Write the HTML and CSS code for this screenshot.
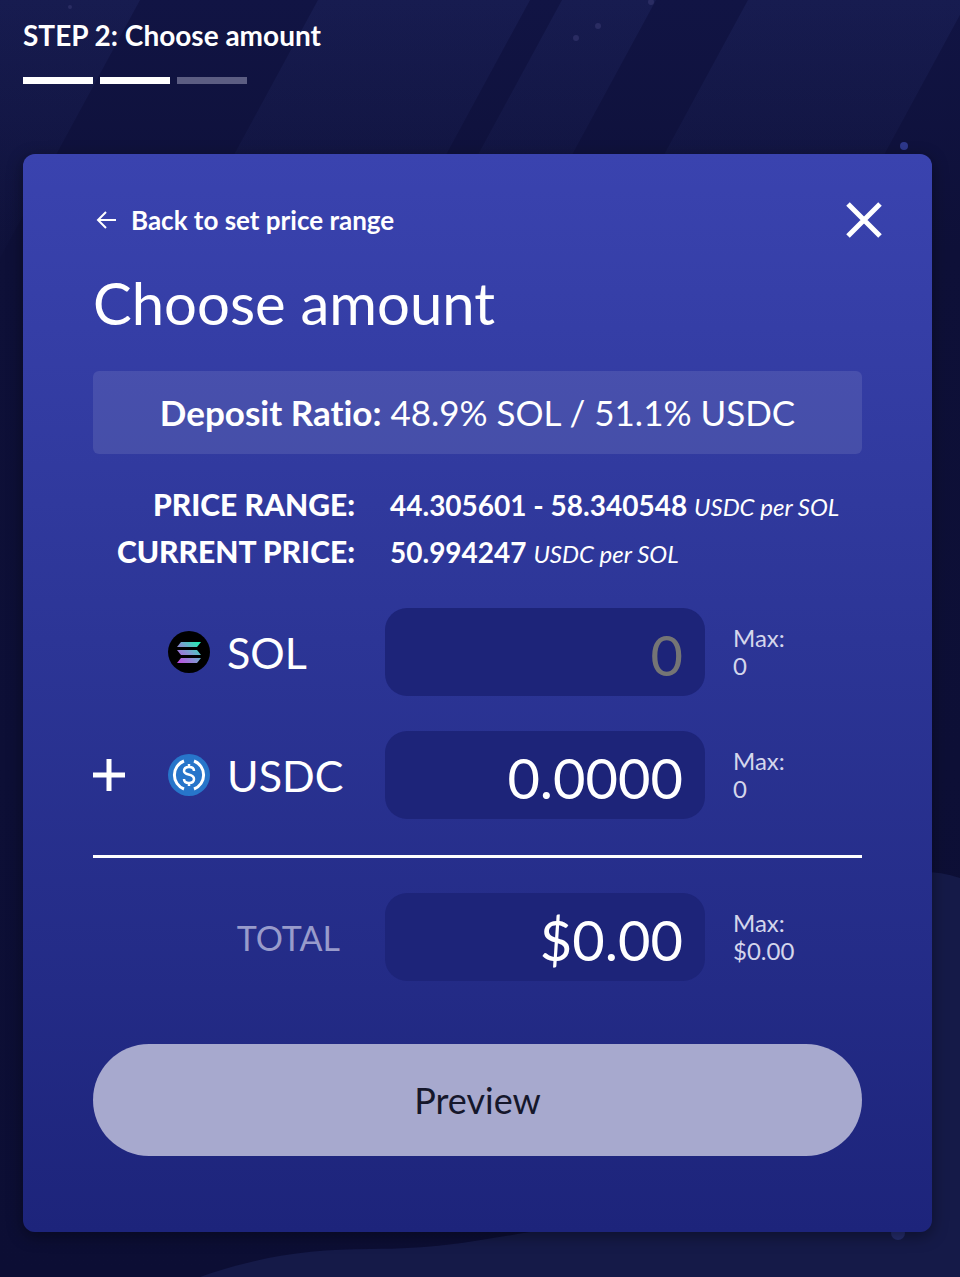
FILE: index.html
```html
<!DOCTYPE html>
<html lang="en">
<head>
  <meta charset="UTF-8" />
  <title>Choose amount</title>
  <meta name="viewport" content="width=device-width, initial-scale=1.0" />
  <link rel="stylesheet" href="styles.css">
</head>
<body>

  <svg class="backdrop" viewBox="0 0 960 1277" preserveAspectRatio="xMidYMin slice" aria-hidden="true">
    <defs>
      <linearGradient id="beam" gradientUnits="userSpaceOnUse" x1="0" y1="0" x2="0" y2="300">
        <stop offset="0" stop-color="#4050a0" stop-opacity=".13" />
        <stop offset="1" stop-color="#4050a0" stop-opacity="0" />
      </linearGradient>
    </defs>
    <g fill="url(#beam)">
      <path d="M0 0H140L0 258z" />
      <path d="M318 0H530L364 306H152z" />
      <path d="M562 0H656L490 306H396z" />
      <path d="M748 0H968L802 306H582z" />
    </g>
    <path fill="#151a48" d="M200 1277C260 1256 310 1249 370 1249C440 1249 480 1240 530 1232L900 874Q930 868 960 878V1277z" />
    <g fill="#2a2c62">
      <circle cx="70" cy="7" r="2" />
      <circle cx="576" cy="38" r="3" />
      <circle cx="598" cy="26" r="3" />
      <circle cx="651" cy="2" r="3" />
    </g>
    <circle cx="904" cy="146" r="4" fill="#2e388c" />
    <circle cx="898" cy="1233" r="7" fill="#252d6e" />
  </svg>

  <main>
    <header class="step">
      <p class="step-title">STEP 2: Choose amount</p>
      <div class="step-bars">
        <span class="done"></span>
        <span class="done"></span>
        <span></span>
      </div>
    </header>

    <form class="card">
      <div class="card-top">
        <a class="back" href="#price-range">
          <svg width="22" height="20" viewBox="0 0 22 20" aria-hidden="true">
            <path d="M20 10H3M10 2L2 10L10 18" fill="none" stroke="currentColor" stroke-width="2" />
          </svg>
          Back to set price range
        </a>
        <button class="close" type="button" aria-label="Close">
          <svg width="40" height="40" viewBox="0 0 40 40" aria-hidden="true">
            <path d="M4 4L36 36M36 4L4 36" stroke="currentColor" stroke-width="5" />
          </svg>
        </button>
      </div>

      <h1>Choose amount</h1>

      <p class="ratio"><strong>Deposit Ratio:</strong> 48.9% SOL / 51.1% USDC</p>

      <dl class="prices">
        <dt>Price range:</dt>
        <dd>44.305601 - 58.340548 <em>USDC per SOL</em></dd>
        <dt>Current price:</dt>
        <dd>50.994247 <em>USDC per SOL</em></dd>
      </dl>

      <div class="row">
        <label class="token" for="sol">
          <svg width="42" height="42" viewBox="0 0 42 42" aria-hidden="true">
            <defs>
              <linearGradient id="sol-fill" gradientUnits="userSpaceOnUse" x1="10" y1="32" x2="31" y2="10">
                <stop offset="0" stop-color="#c04be0" />
                <stop offset=".5" stop-color="#7f9ad0" />
                <stop offset="1" stop-color="#19f5b0" />
              </linearGradient>
            </defs>
            <circle cx="21" cy="21" r="21" />
            <g fill="url(#sol-fill)">
              <path d="M13 11H33L29 16H9z" />
              <path d="M9 19H29L33 24H13z" />
              <path d="M13 27H33L29 32H9z" />
            </g>
          </svg>
          SOL
        </label>
        <input type="text" id="sol" placeholder="0">
        <p class="max">Max:<br>0</p>
      </div>

      <div class="row">
        <label class="token" for="usdc">
          <svg class="plus" width="32" height="32" viewBox="0 0 32 32" aria-hidden="true">
            <path d="M16 0V32M0 16H32" stroke="currentColor" stroke-width="5" />
          </svg>
          <svg width="42" height="42" viewBox="0 0 42 42" aria-hidden="true">
            <circle cx="21" cy="21" r="21" fill="#2775ca" />
            <g fill="none" stroke="#fff" stroke-width="3">
              <path d="M16 7A15 15 0 0 0 16 35M26 7A15 15 0 0 1 26 35" />
              <path d="M26 17C26 14 24 13 21 13C18 13 16 14.500 16 17C16 22 26 19 26 25C26 28 24 29 21 29C18 29 16 28 16 25M21 10V13M21 29V32" stroke-width="2.500" />
            </g>
          </svg>
          USDC
        </label>
        <input type="text" id="usdc" value="0.0000">
        <p class="max">Max:<br>0</p>
      </div>

      <hr>

      <div class="row">
        <label class="total" for="total">TOTAL</label>
        <input type="text" id="total" value="$0.00" readonly>
        <p class="max">Max:<br>$0.00</p>
      </div>

      <button class="preview" type="submit" disabled>Preview</button>
    </form>
  </main>

</body>
</html>
```

FILE: styles.css
```css
* {
  box-sizing: border-box;
}

body {
  position: relative;
  margin: 0;
  min-height: 100vh;
  font-family: Lato, "Open Sans", sans-serif;
  font-variant-ligatures: none;
  color: white;
  background: linear-gradient(#111444, #0e1038 250px, #0c0e34);
}

.backdrop {
  position: absolute;
  inset: 0;
  z-index: -1;
  width: 100%;
  height: 100%;
}

main {
  padding: 20px 28px 44px 23px;
}

h1,
p,
dl,
dd {
  margin: 0;
}

/* Step indicator */
.step {
  margin-bottom: 70px;
}

.step-title {
  font-size: 28px;
  font-weight: 700;
  line-height: 30px;
}

.step-bars {
  display: flex;
  gap: 7px;
  margin-top: 27px;
}

.step-bars span {
  width: 70px;
  height: 7px;
  background: #5c5d82;
}

.step-bars .done {
  background: white;
}

/* Card */
.card {
  padding: 44px 70px 76px;
  border-radius: 12px;
  background: linear-gradient(#3a43af, #2c3596 45%, #1d247b);
  box-shadow: 0 4px 16px rgba(0, 0, 0, 0.4);
}

.card-top {
  display: flex;
  justify-content: space-between;
  align-items: center;
  margin-right: -24px;
}

.back {
  display: flex;
  align-items: center;
  gap: 13px;
  padding-left: 3px;
  font-size: 26px;
  font-weight: 700;
  color: white;
  text-decoration: none;
}

.close {
  display: flex;
  padding: 2px;
  border: none;
  background: none;
  color: white;
  cursor: pointer;
}

h1 {
  margin-top: 29px;
  font-size: 58px;
  font-weight: 400;
  line-height: 64px;
}

.ratio {
  margin-top: 36px;
  border-radius: 6px;
  background: rgba(255, 255, 255, 0.1);
  font-size: 35px;
  line-height: 83px;
  text-align: center;
}

.prices {
  display: grid;
  grid-template-columns: 262px 1fr;
  align-items: baseline;
  gap: 4px 35px;
  margin-top: 29px;
  font-size: 28px;
  font-weight: 700;
  line-height: 42px;
  white-space: nowrap;
}

.prices dt {
  font-size: 30px;
  font-weight: 900;
  text-align: right;
  text-transform: uppercase;
}

.prices em {
  font-size: 24px;
  font-weight: 400;
  line-height: 24px;
}

/* Amount rows */
.row {
  display: grid;
  grid-template-columns: 264px minmax(0, 1fr) 129px;
  align-items: center;
  column-gap: 28px;
  margin-top: 35px;
}

.token {
  display: flex;
  align-items: center;
  gap: 17px;
  padding-left: 75px;
  font-size: 43px;
}

.plus {
  margin-left: -75px;
  margin-right: 26px;
}

.row input {
  width: 100%;
  height: 88px;
  padding: 4px 22px 0;
  border: none;
  border-radius: 22px;
  background: #1d2479;
  color: white;
  font-family: inherit;
  font-size: 56px;
  text-align: right;
}

.row input::placeholder {
  color: #757575;
  opacity: 1;
}

.max {
  font-size: 24px;
  line-height: 28px;
  color: #d4d6ec;
}

.total {
  padding-right: 17px;
  font-size: 34px;
  text-align: right;
  color: #989bcb;
}

hr {
  height: 3px;
  margin: 36px 0 0;
  border: none;
  background: white;
}

.preview {
  display: block;
  width: 100%;
  height: 112px;
  margin-top: 63px;
  border: none;
  border-radius: 56px;
  background: #a7a9ce;
  color: #15172b;
  font-family: inherit;
  font-size: 36px;
}
```
